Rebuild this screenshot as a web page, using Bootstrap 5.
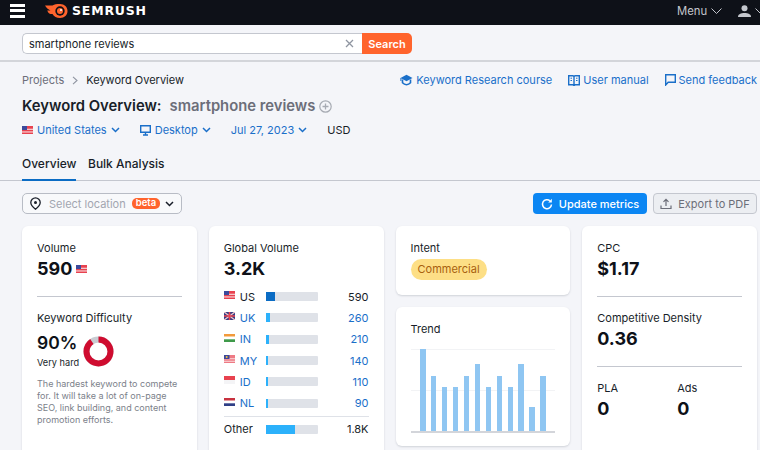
<!doctype html>
<html lang="en"><head><meta charset="utf-8"><title>Keyword Overview</title>
<link rel="stylesheet" href="https://cdn.jsdelivr.net/npm/bootstrap@5.3.0/dist/css/bootstrap.min.css">
<style>
html,body{height:450px;overflow:hidden}
body{font-family:Inter,"Noto Sans",sans-serif;background:#f4f5f9;color:#181e29;font-size:11px;line-height:16px}
a{color:#1a6fc9;text-decoration:none}
.topbar{height:25px;background:#0e1118;color:#c4c7cd;padding:0 0 3px 10px}
.burger{width:15px;height:14px;background:linear-gradient(#fff 0 3px,transparent 3px 5.5px,#fff 5.5px 8.5px,transparent 8.5px 11px,#fff 11px 14px)}
.brandname{font-family:"DejaVu Sans",sans-serif;font-weight:700;font-size:12.5px;color:#fff;letter-spacing:.8px;margin-left:4px}
.logo-wrap{margin-left:20px}
.menuzone{width:83px;font-size:11.3px}
.searchzone{height:37px;padding:8px 0 0 22px;border-bottom:2px solid #d3d5da}
.searchbox{width:340px;height:21px;background:#fff;border:1px solid #c4c7cf;border-right:0;border-radius:5px 0 0 5px;padding:0 8px 0 6px;font-size:11px}
.searchbtn{width:50px;height:21px;background:#ff642d;color:#fff;font-weight:600;border:0;border-radius:0 5px 5px 0;font-size:11px;padding:0}
.mainpad{padding:0 3px 0 22px}
.crumbs{height:32px;padding-top:10px;font-size:11px}
.crumb-muted{color:#6c6e79}
.helplinks{gap:16px}
.helplinks a{display:flex;align-items:center;gap:3px}
.pagetitle{font-size:14.8px;line-height:20px;font-weight:600;margin:0;height:24px}
.pagetitle span{color:#6c6e79}
.selectors{height:24px}
.selectors a{display:flex;align-items:center;gap:4px;margin-right:20px}
.tabbar{height:27px;margin:12px -3px 0 -22px;padding-left:22px;border-bottom:1px solid #c4c7cf;font-size:12px;font-weight:500}
.tabitem{height:27px;margin-right:12px;padding-top:2px;flex:none}
.tabitem.on{border-bottom:2px solid #0b6cc4;width:54px}
.toolrow{margin-top:12px;height:21px}
.locselect{width:160px;height:21px;border:1px solid #b8bcc5;border-radius:5px;background:#f8f9fb;padding:0 7px 0 7px;color:#a2a6b0;font-size:11px;white-space:nowrap}
.betatag{background:#ff642d;color:#fff;font-size:9.5px;font-weight:600;line-height:10px;border-radius:5px;padding:0 4px 1px;margin-left:6px}
.toolbtns{gap:6px}
.btn-update,.btn-export{height:21px;font-size:11px;border-radius:4px;padding:0;display:flex;align-items:center;justify-content:center;gap:6px}
.btn-update{width:114px;background:#0b86f3;color:#fff;font-weight:500;border:0}
.btn-export{width:104px;background:#eceef2;color:#6c6e79;border:1px solid #c4c7cf}
.cardgrid{display:grid;grid-template-columns:repeat(4,minmax(0,1fr));gap:12px;margin-top:12px;height:221px}
.metric{background:#fff;border-radius:6px;box-shadow:0 1px 2px rgba(30,40,60,.17);padding:15px}
.mlabel{font-size:11px;line-height:15px}
.mvalue{font-size:18px;line-height:22px;font-weight:700;color:#0e1118;margin-top:2px}
.divline{border-top:1px solid #c4c7cf;margin:16px 0 14px}
.kd-row{margin-top:6px}
.kd-num{font-size:17.500px;line-height:22px;font-weight:600;color:#0e1118}
.kd-sub{font-size:9.2px;line-height:14px;margin-top:2px;white-space:nowrap}
.kd-desc{font-size:9px;line-height:12px;color:#7c7f8a;margin-top:7.5px}
.geo-list{margin-top:6px}
.geo-row{display:flex;align-items:center;height:21.33px;font-size:11px}
.geo-flag{width:11px;margin-right:5px;margin-top:-3px;display:flex;flex:none}
.geo-code{width:26px;flex:none}
.geo-track{width:52px;height:9px;background:#dfe2e8;display:flex;border-radius:1px}
.geo-fill{background:#2cb1fb;height:100%}
.geo-num{margin-left:auto}
.geo-other{border-top:1px solid #dfe2e8;margin-top:2px;height:26px;box-sizing:border-box}
.geo-name{width:42px;flex:none}
.intentpill{display:inline-block;background:#fddf86;color:#a8610e;border-radius:11px;height:21px;line-height:21px;padding:0 7px;font-size:11px;margin-top:3px}
.leftstack{display:flex;flex-direction:column;gap:12px;height:221px}
.intentcard{height:69px;flex:none}
.trendcard{height:139px;flex:none}
.chartbox{height:84px;margin-top:12px;border-bottom:2px solid #d3d5da;display:flex;align-items:flex-end;padding-left:9.5px;gap:5.45px;background:linear-gradient(#f2f3f5 0 1px,transparent 1px 41px,#f2f3f5 41px 42px,transparent 42px)}
.trendbar{width:5.5px;background:#8fc6f2}
.pairrow{display:flex}
.pairrow>div{width:80px;flex:none}
svg{display:block;flex:none}
</style></head><body>
<nav class="topbar d-flex align-items-center">
  <div class="burger"></div>
  <div class="logo-wrap d-flex align-items-center">
    <svg width="23" height="14" viewBox="0 0 23 14"><path d="M0 1.500h7.500C9.500.3 11.500 0 15 0c4.500 0 7.500 3 7.500 7s-3 7-7.500 7c-3.500 0-6-1.500-7.500-4H5.500C3.800 9.500 2.800 8 2.200 6.500h3.300C3.200 5.500 1.200 3.800 0 1.500z" fill="#ff642d"/><circle cx="15" cy="7" r="4.700" fill="#0e1118"/><circle cx="15" cy="7" r="3" fill="#ff642d"/><circle cx="16" cy="6" r="1" fill="#fff"/></svg>
    <span class="brandname">SEMRUSH</span>
  </div>
  <div class="menuzone ms-auto d-flex align-items-center overflow-hidden">
    <span>Menu</span>
    <svg class="ms-1" width="11" height="6" viewBox="0 0 11 6"><path d="M.5.500l5 5 5-5" fill="none" stroke="#c4c7cd"/></svg>
    <svg class="ms-3" width="13" height="12" viewBox="0 0 13 12"><circle cx="6.500" cy="3.300" r="3" fill="#c4c7cd"/><path d="M0 12c0-3 3-4 6.500-4s6.500 1 6.500 4z" fill="#c4c7cd"/></svg>
    <svg class="ms-1" width="11" height="6" viewBox="0 0 11 6"><path d="M.5.500l5 5 5-5" fill="none" stroke="#c4c7cd"/></svg>
  </div>
</nav>
<div class="searchzone d-flex align-items-start">
  <div class="searchbox d-flex align-items-center justify-content-between"><span>smartphone reviews</span><svg width="9" height="9" viewBox="0 0 9 9"><path d="M1 1l7 7M8 1L1 8" stroke="#8f95a1" stroke-width="1.300"/></svg></div>
  <button class="searchbtn">Search</button>
</div>
<main class="mainpad">
  <div class="crumbs d-flex justify-content-between align-items-start">
    <div class="d-flex align-items-center"><span class="crumb-muted">Projects</span>
      <svg class="mx-2" width="6" height="9" viewBox="0 0 6 9"><path d="M1 .800L5 4.500 1 8.200" fill="none" stroke="#8f95a1" stroke-width="1.100"/></svg><span>Keyword Overview</span></div>
    <div class="helplinks d-flex">
      <a href="#"><svg width="13" height="12" viewBox="0 0 13 12"><path d="M6.500.800L12.500 4 6.500 7.200 .500 4z" fill="#1a6fc9"/><path d="M2.500 5.500v3.300c2.300 2.500 5.700 2.500 8 0V5.500" fill="none" stroke="#1a6fc9" stroke-width="1.600"/><path d="M.9 4v3" stroke="#1a6fc9"/></svg>Keyword Research course</a>
      <a href="#"><svg width="12" height="11" viewBox="0 0 12 11"><path d="M.7.700H5L6 1.500 7 .7h4.300v9H7.500L6 10.500 4.500 9.700H.7zM6 1.500v9" fill="none" stroke="#1a6fc9" stroke-width="1.400"/><path d="M2.500 3.200h1.500M8 3.200h1.500M2.500 5.500h1.500M8 5.500h1.500" stroke="#1a6fc9"/></svg>User manual</a>
      <a href="#"><svg width="11" height="12" viewBox="0 0 11 12"><path d="M.7 11V.7h9.600v7.600H3.200z" fill="none" stroke="#1a6fc9" stroke-width="1.400"/></svg>Send feedback</a>
    </div>
  </div>
  <div class="pagetitle d-flex align-items-center">Keyword Overview:<span class="ms-2">smartphone reviews</span>
    <svg class="ms-1" width="13" height="13" viewBox="0 0 13 13"><circle cx="6.500" cy="6.500" r="5.700" fill="none" stroke="#a7abb3" stroke-width="1.200"/><path d="M6.500 3.500v6M3.500 6.500h6" stroke="#a7abb3" stroke-width="1.300"/></svg></div>
  <div class="selectors d-flex align-items-center">
    <a href="#"><svg width="11" height="8" viewBox="0 0 11 8"><rect width="11" height="8" fill="#e8424f"/><rect y="2.700" width="11" height="1.300" fill="#f7c5c9"/><rect y="5.300" width="11" height="1.300" fill="#f7c5c9"/><rect width="5" height="4" fill="#3c4a9c"/></svg>United States<svg width="9" height="6" viewBox="0 0 9 6"><path d="M1 1l3.500 3.500L8 1" fill="none" stroke="#1a6fc9" stroke-width="1.500"/></svg></a>
    <a href="#"><svg width="11" height="11" viewBox="0 0 11 11"><path d="M.7.700h9.600v6.600H.7z" fill="none" stroke="#1a6fc9" stroke-width="1.400"/><path d="M3 10h5M5.500 7.500V10" stroke="#1a6fc9" stroke-width="1.400"/></svg>Desktop<svg width="9" height="6" viewBox="0 0 9 6"><path d="M1 1l3.500 3.500L8 1" fill="none" stroke="#1a6fc9" stroke-width="1.500"/></svg></a>
    <a href="#">Jul 27, 2023<svg width="9" height="6" viewBox="0 0 9 6"><path d="M1 1l3.500 3.500L8 1" fill="none" stroke="#1a6fc9" stroke-width="1.500"/></svg></a>
    <span>USD</span>
  </div>
  <div class="tabbar d-flex">
    <div class="tabitem on">Overview</div><div class="tabitem">Bulk Analysis</div>
  </div>
  <div class="toolrow d-flex justify-content-between">
    <div class="locselect d-flex align-items-center">
      <svg class="me-2" width="11" height="13" viewBox="0 0 11 13"><path d="M5.500.8a4.700 4.700 0 0 1 4.700 4.700c0 3-3 5.400-4.700 6.700C3.800 10.900.8 8.500.8 5.500A4.700 4.700 0 0 1 5.500.8z" fill="none" stroke="#181e29" stroke-width="1.300"/><circle cx="5.500" cy="5.500" r="1.500" fill="#181e29"/></svg>
      <span>Select location</span><span class="betatag">beta</span>
      <svg class="ms-auto" width="9" height="6" viewBox="0 0 9 6"><path d="M1 1l3.500 3.500L8 1" fill="none" stroke="#181e29" stroke-width="1.500"/></svg>
    </div>
    <div class="toolbtns d-flex">
      <button class="btn-update"><svg width="12" height="12" viewBox="0 0 12 12"><path d="M10.500 6.500a4.500 4.500 0 1 1-1.500-3.700" fill="none" stroke="#fff" stroke-width="1.500"/><path d="M10.800.8v3.600H7.200z" fill="#fff"/></svg>Update metrics</button>
      <button class="btn-export"><svg width="12" height="12" viewBox="0 0 12 12"><path d="M6 8V1.500M3.500 3.800L6 1.300l2.500 2.500M1 7.500v3h10v-3" fill="none" stroke="#6c6e79" stroke-width="1.200"/></svg>Export to PDF</button>
    </div>
  </div>
  <div class="cardgrid">
    <section class="metric">
      <div class="mlabel">Volume</div>
      <div class="mvalue d-flex align-items-center">590<svg class="ms-1" width="11" height="8" viewBox="0 0 11 8"><rect width="11" height="8" fill="#e8424f"/><rect y="2.700" width="11" height="1.300" fill="#f7c5c9"/><rect y="5.300" width="11" height="1.300" fill="#f7c5c9"/><rect width="5" height="4" fill="#3c4a9c"/></svg></div>
      <div class="divline"></div>
      <div class="mlabel">Keyword Difficulty</div>
      <div class="kd-row d-flex align-items-center">
        <div><div class="kd-num">90%</div><div class="kd-sub">Very hard</div></div>
        <svg class="ms-1" width="31" height="31" viewBox="0 0 31 31"><circle cx="15.500" cy="15.500" r="12" fill="none" stroke="#c9ccd2" stroke-width="6"/><circle cx="15.500" cy="15.500" r="12" fill="none" stroke="#cf0c2f" stroke-width="6" stroke-dasharray="67.900 75.400" transform="rotate(-90 15.500 15.500)"/></svg>
      </div>
      <div class="kd-desc">The hardest keyword to compete for. It will take a lot of on-page SEO, link building, and content promotion efforts.</div>
    </section>
    <section class="metric">
      <div class="mlabel">Global Volume</div>
      <div class="mvalue">3.2K</div>
      <div class="geo-list">
      <div class="geo-row"><span class="geo-flag"><svg width="11" height="8" viewBox="0 0 11 8"><rect width="11" height="8" fill="#e8424f"/><rect y="2.700" width="11" height="1.300" fill="#f7c5c9"/><rect y="5.300" width="11" height="1.300" fill="#f7c5c9"/><rect width="5" height="4" fill="#3c4a9c"/></svg></span><span class="geo-code">US</span><div class="geo-track"><div class="geo-fill" style="width:9px;background:#0b6cc4"></div></div><span class="geo-num">590</span></div>
      <div class="geo-row"><span class="geo-flag"><svg width="11" height="8" viewBox="0 0 11 8"><rect width="11" height="8" fill="#2f3f86"/><path d="M0 0l11 8M11 0L0 8" stroke="#f3c3c7" stroke-width="1.400"/><path d="M5.500 0v8M0 4h11" stroke="#e8424f" stroke-width="1.600"/></svg></span><a class="geo-code" href="#">UK</a><div class="geo-track"><div class="geo-fill" style="width:4px"></div></div><a class="geo-num" href="#">260</a></div>
      <div class="geo-row"><span class="geo-flag"><svg width="11" height="8" viewBox="0 0 11 8"><rect width="11" height="2.700" fill="#f29a3b"/><rect y="2.700" width="11" height="2.700" fill="#fff"/><rect y="5.300" width="11" height="2.700" fill="#3f9a4a"/></svg></span><a class="geo-code" href="#">IN</a><div class="geo-track"><div class="geo-fill" style="width:3px"></div></div><a class="geo-num" href="#">210</a></div>
      <div class="geo-row"><span class="geo-flag"><svg width="11" height="8" viewBox="0 0 11 8"><rect width="11" height="8" fill="#ee7a84"/><rect y="3" width="11" height="1.300" fill="#f7c5c9"/><rect y="5.700" width="11" height="1.300" fill="#f7c5c9"/><rect width="5.500" height="4" fill="#3c4a9c"/><circle cx="2.700" cy="2" r="1" fill="#f4c23c"/></svg></span><a class="geo-code" href="#">MY</a><div class="geo-track"><div class="geo-fill" style="width:2px"></div></div><a class="geo-num" href="#">140</a></div>
      <div class="geo-row"><span class="geo-flag"><svg width="11" height="8" viewBox="0 0 11 8"><rect width="11" height="4" fill="#e8424f"/><rect y="4" width="11" height="4" fill="#f4f4f6"/></svg></span><a class="geo-code" href="#">ID</a><div class="geo-track"><div class="geo-fill" style="width:2px"></div></div><a class="geo-num" href="#">110</a></div>
      <div class="geo-row"><span class="geo-flag"><svg width="11" height="8" viewBox="0 0 11 8"><rect width="11" height="2.700" fill="#c8323f"/><rect y="2.700" width="11" height="2.700" fill="#fff"/><rect y="5.300" width="11" height="2.700" fill="#2f3f86"/></svg></span><a class="geo-code" href="#">NL</a><div class="geo-track"><div class="geo-fill" style="width:2px"></div></div><a class="geo-num" href="#">90</a></div>
      <div class="geo-row geo-other"><span class="geo-name">Other</span><div class="geo-track"><div class="geo-fill" style="width:29px"></div></div><span class="geo-num">1.8K</span></div>
      </div>
    </section>
    <div class="leftstack">
      <section class="metric intentcard"><div class="mlabel">Intent</div><span class="intentpill">Commercial</span></section>
      <section class="metric trendcard"><div class="mlabel">Trend</div>
        <div class="chartbox">
          <div class="trendbar" style="height:82px"></div><div class="trendbar" style="height:55px"></div><div class="trendbar" style="height:44px"></div><div class="trendbar" style="height:44px"></div><div class="trendbar" style="height:55px"></div><div class="trendbar" style="height:67px"></div><div class="trendbar" style="height:44px"></div><div class="trendbar" style="height:55px"></div><div class="trendbar" style="height:44px"></div><div class="trendbar" style="height:67px"></div><div class="trendbar" style="height:24px"></div><div class="trendbar" style="height:55px"></div>
        </div>
      </section>
    </div>
    <section class="metric">
      <div class="mlabel">CPC</div><div class="mvalue">$1.17</div>
      <div class="divline"></div>
      <div class="mlabel">Competitive Density</div><div class="mvalue">0.36</div>
      <div class="divline"></div>
      <div class="pairrow"><div><div class="mlabel">PLA</div><div class="mvalue">0</div></div><div><div class="mlabel">Ads</div><div class="mvalue">0</div></div></div>
    </section>
  </div>
</main>
</body></html>
